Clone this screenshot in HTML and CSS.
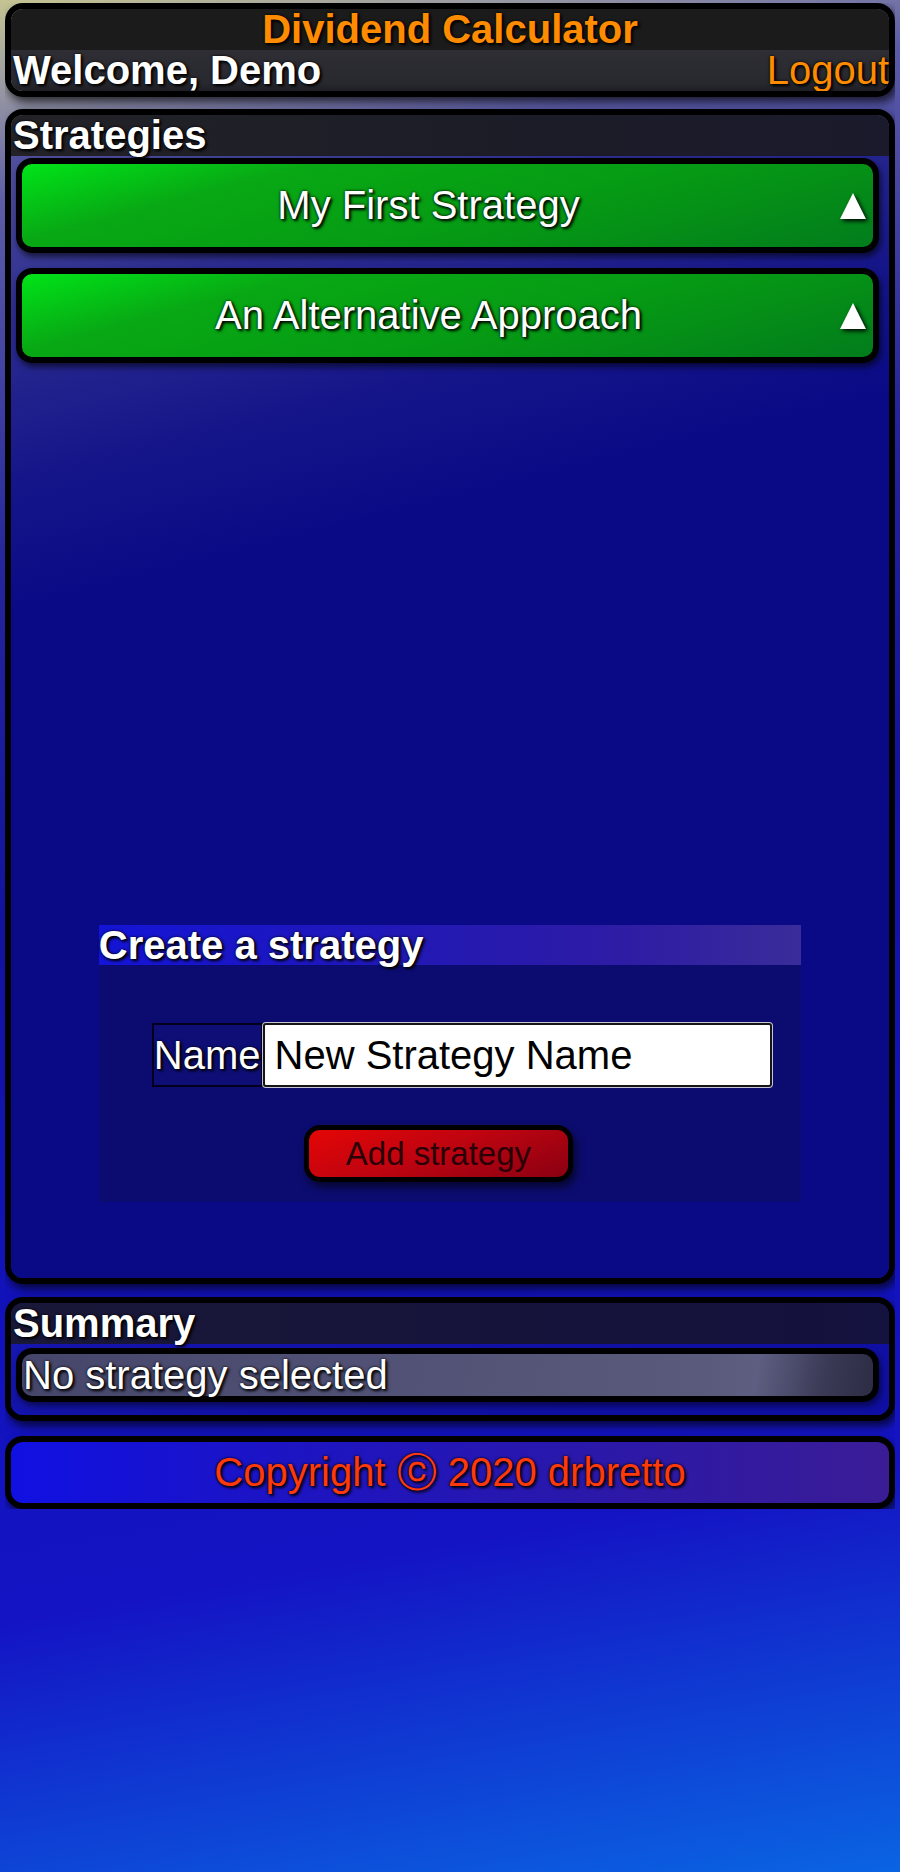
FILE: index.html
```html
<!DOCTYPE html>
<html lang="en">
<head>
<meta charset="utf-8">
<title>Dividend Calculator</title>
<link rel="stylesheet" href="styles.css">
</head>
<body>
<header class="panel header">
  <div class="title-row">Dividend Calculator</div>
  <div class="user-row"><span class="welcome">Welcome, Demo</span><a class="logout" href="#">Logout</a></div>
</header>

<section class="panel strategies">
  <h2 class="panel-title">Strategies</h2>
  <div class="panel-body">
    <div class="strategy-list">
      <div class="strategy-btn">
        <span class="strategy-name">My First Strategy</span>
        <span class="toggle"><svg width="28" height="28" viewBox="0 0 28 28"><polygon points="14,1 27,27 1,27" fill="#fff"/></svg></span>
      </div>
      <div class="strategy-btn">
        <span class="strategy-name">An Alternative Approach</span>
        <span class="toggle"><svg width="28" height="28" viewBox="0 0 28 28"><polygon points="14,1 27,27 1,27" fill="#fff"/></svg></span>
      </div>
    </div>
    <form class="create">
      <h3 class="create-title">Create a strategy</h3>
      <div class="create-body">
        <div class="name-row">
          <label class="name-label" for="sname">Name</label>
          <input class="name-input" id="sname" type="text" value="New Strategy Name">
        </div>
        <button class="add-btn" type="button">Add strategy</button>
      </div>
    </form>
  </div>
</section>

<section class="panel summary">
  <h2 class="panel-title summary-title">Summary</h2>
  <div class="summary-body">
    <div class="summary-bar">No strategy selected</div>
  </div>
</section>

<footer class="panel footer">Copyright ⓒ 2020 drbretto</footer>
</body>
</html>
```

FILE: styles.css
```css
html {
  min-height: 100%;
  background: linear-gradient(170deg, #c4c492 0%, #9c9ca2 4%, #5c5ca8 10%, #24249c 28%, #12129e 45%, #1212bc 65%, #1414c4 80%, #0a64e2 100%);
}

body {
  margin: 3px 5px 0;
  font-family: "Liberation Sans", Arial, sans-serif;
  font-size: 40px;
  color: #fff;
  text-shadow: 2px 2px 3px #000, 0 0 3px #000;
}

.panel {
  border: 6px solid #000;
  border-radius: 18px;
  overflow: hidden;
  box-shadow: 3px 5px 10px rgba(0, 0, 0, 0.7);
}

/* Header */
.title-row {
  height: 41px;
  line-height: 41px;
  text-align: center;
  font-weight: bold;
  color: #ff8c00;
  background: #1b1b1c;
}

.user-row {
  display: flex;
  justify-content: space-between;
  height: 41px;
  line-height: 41px;
  padding-left: 2px;
  background: linear-gradient(to bottom, #2e2e34 0%, #28282f 80%, #1e1e24 100%);
}

.welcome {
  font-weight: bold;
}

.logout {
  color: #ff8c00;
  text-decoration: none;
}

/* Panels */
.panel-title {
  margin: 0;
  font-size: 40px;
  font-weight: bold;
  height: 41px;
  line-height: 41px;
  padding-left: 2px;
  background: linear-gradient(to right, #222227, #1c1c28 60%, #1a1a2c);
}

.strategies {
  margin-top: 12px;
}

.strategies .panel-body {
  padding-bottom: 76px;
  background: linear-gradient(166deg, #50509c 0%, #2c2c90 12%, #16168a 24%, #0a0a86 34%, #0a0a86 100%);
}

.strategy-list {
  box-sizing: border-box;
  height: 769px;
  padding: 2px 10px 0 5px;
  display: flex;
  flex-direction: column;
  gap: 15px;
}

.strategy-btn {
  display: flex;
  align-items: center;
  padding: 21px 0;
  line-height: 41px;
  border: 6px solid #000;
  border-radius: 16px;
  background: linear-gradient(165deg, #00e418 0%, #08a814 25%, #069a14 60%, #027c1c 100%);
  box-shadow: 2px 4px 6px rgba(0, 0, 0, 0.6);
}

.strategy-name {
  flex: 1;
  text-align: center;
}

.toggle {
  box-sizing: border-box;
  width: 38px;
  padding-right: 6px;
  display: flex;
  justify-content: flex-end;
}

.toggle svg {
  display: block;
  filter: drop-shadow(2px 2px 2px #000);
}

/* Create form */
.create {
  width: 80%;
  margin: 0 auto;
}

.create-title {
  margin: 0;
  font-size: 40px;
  font-weight: bold;
  height: 40px;
  line-height: 40px;
  background: linear-gradient(90deg, #1414d6 0%, #2218b4 45%, #2e1ca4 75%, #3a2c9a 100%);
}

.create-body {
  box-sizing: border-box;
  height: 237px;
  padding-top: 58px;
  background: #0c0c70;
}

.name-row {
  display: flex;
  margin-left: 53px;
}

.name-label {
  display: flex;
  align-items: center;
  border: 2px solid #00001c;
  background: #0e0e76;
}

.name-input {
  box-sizing: border-box;
  width: 509px;
  height: 64px;
  padding: 0 10px;
  font-family: inherit;
  font-size: 40px;
  color: #000;
  text-shadow: none;
  background: #fff;
  border: 2px solid #151515;
  border-radius: 3px;
  box-shadow: 0 0 0 1px #c4c4d4;
  outline: none;
}

.add-btn {
  display: block;
  margin: 38px 0 0 205px;
  padding: 5px 37px;
  font-family: inherit;
  font-size: 33px;
  line-height: 37px;
  color: #2a0008;
  text-shadow: none;
  border: 5px solid #000;
  border-radius: 16px;
  background: linear-gradient(160deg, #e40606 0%, #c00410 45%, #8a0012 100%);
  box-shadow: 3px 5px 9px rgba(0, 0, 0, 0.6);
}

/* Summary */
.summary {
  margin-top: 13px;
}

.summary-title {
  background: linear-gradient(to right, #1a1838, #15133a 60%, #14123e);
}

.summary-body {
  padding: 4px 10px 13px 5px;
  background: linear-gradient(170deg, #1616b0 0%, #1010a4 60%, #0e0ea2 100%);
}

.summary-bar {
  line-height: 42px;
  padding-left: 1px;
  border: 6px solid #000;
  border-radius: 16px;
  background: linear-gradient(100deg, #46466a 0%, #525276 45%, #5a5a7c 80%, #5e5e82 86%, #3a3a56 94%, #2c2c44 100%);
  box-shadow: 2px 4px 6px rgba(0, 0, 0, 0.5);
}

/* Footer */
.footer {
  margin-top: 15px;
  padding: 7px 0 8px;
  line-height: 46px;
  text-align: center;
  color: #ff3a0a;
  background: linear-gradient(90deg, #1010e2 0%, #1c14c4 30%, #2a18aa 65%, #3a1c96 100%);
}
```
